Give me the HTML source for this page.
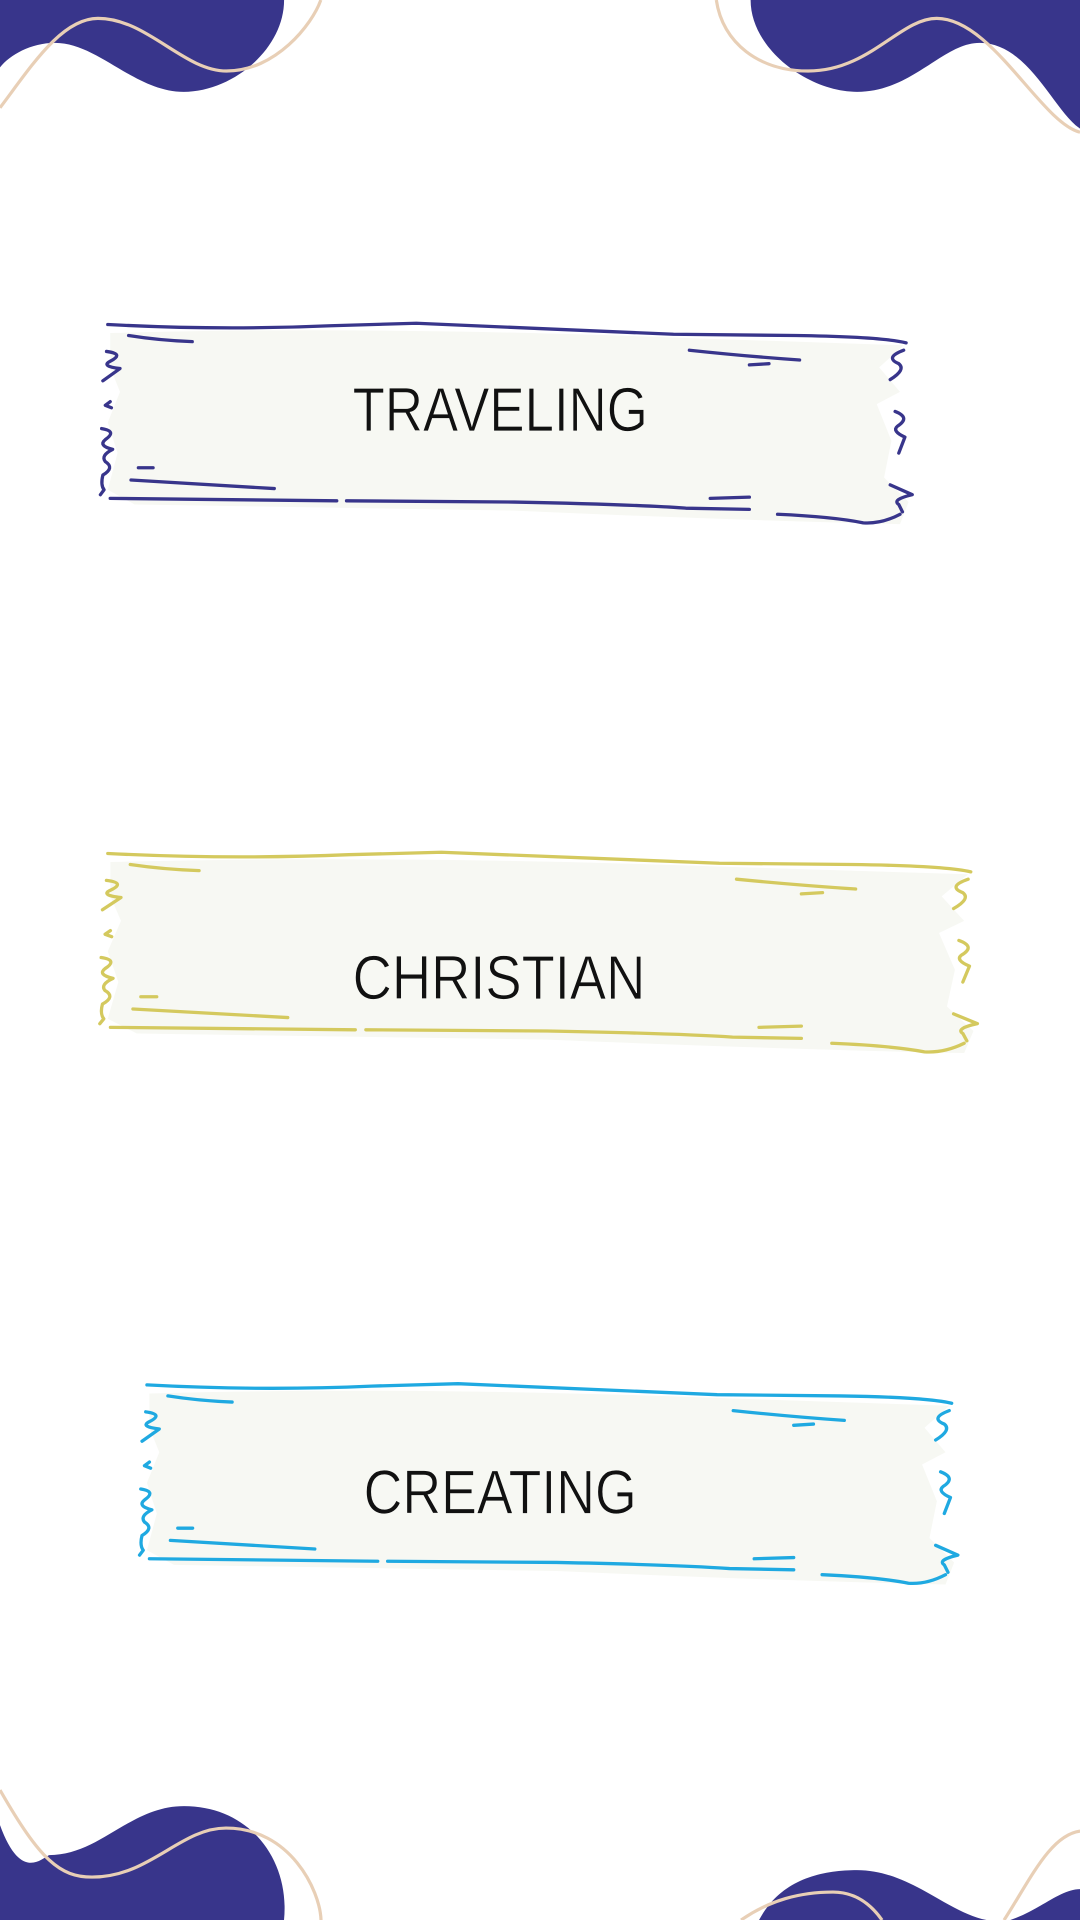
<!DOCTYPE html>
<html><head><meta charset="utf-8"><style>
html,body{margin:0;padding:0;background:#fff;}
svg{display:block;}
</style></head><body>
<svg width="1080" height="1920" viewBox="0 0 882 1568" xmlns="http://www.w3.org/2000/svg">
<defs>
<g id="tape">
<path d="M90,272 Q300,266 560,276 L738,282 L718,300 L735,320 L716,330 L728,360 L722,390 L742,410 L735,428 Q600,425 420,417 L110,412 L88,400 L96,370 L88,345 L98,320 L90,300 Z" fill="#f7f8f3" stroke="none"/>
<g fill="none" stroke-width="3.3" stroke-linecap="round" stroke-linejoin="round">
<path d="M88,265 Q180,270 270,266 L340,264 Q450,269 550,273 L650,274 Q720,275 740,280" vector-effect="non-scaling-stroke"/>
<path d="M105,274 Q130,278 157,279" vector-effect="non-scaling-stroke"/>
<path d="M87,287 Q102,289 90,295 Q82,299 98,301 L84,311" vector-effect="non-scaling-stroke"/>
<path d="M90,328 L86,331 L91,333" vector-effect="non-scaling-stroke"/>
<path d="M83,350 Q96,352 86,359 Q80,364 92,367 Q82,372 86,377 Q94,382 84,388 Q82,396 85,400 L82,404" vector-effect="non-scaling-stroke"/>
<path d="M113,382 L125,382" vector-effect="non-scaling-stroke"/>
<path d="M107,392 Q170,396 224,399" vector-effect="non-scaling-stroke"/>
<path d="M90,407 L275,409" vector-effect="non-scaling-stroke"/>
<path d="M283,409 L420,410 Q520,412 560,415 L612,416" vector-effect="non-scaling-stroke"/>
<path d="M580,407 L612,406" vector-effect="non-scaling-stroke"/>
<path d="M635,420 Q680,422 705,427 Q720,428 735,420" vector-effect="non-scaling-stroke"/>
<path d="M727,396 L745,404 Q728,408 734,412 L737,418" vector-effect="non-scaling-stroke"/>
<path d="M563,286 Q610,291 653,294" vector-effect="non-scaling-stroke"/>
<path d="M612,298 L628,297" vector-effect="non-scaling-stroke"/>
<path d="M738,286 Q722,292 734,297 Q740,302 727,310" vector-effect="non-scaling-stroke"/>
<path d="M731,336 Q744,341 733,348 Q728,352 739,357 L734,370" vector-effect="non-scaling-stroke"/>
</g>
</g>
</defs>

<!-- top corners -->
<path d="M0,0 L232,0 C232,40 190,75 150,75 C110,75 80,35 45,35 C25,35 8,45 0,55 Z" fill="#38358b"/>
<path d="M0,88 C25,55 50,15 80,15 C120,15 150,58 185,58 C225,58 255,20 262,0" fill="none" stroke="#e8cfb6" stroke-width="2.6"/>
<path d="M613,0 C613,40 660,75 700,75 C745,75 770,35 800,35 C840,35 860,90 882,105 L882,0 Z" fill="#38358b"/>
<path d="M585,0 C590,35 620,58 660,58 C710,58 735,15 765,15 C810,15 850,100 882,108" fill="none" stroke="#e8cfb6" stroke-width="2.6"/>

<!-- bottom corners -->
<g transform="scale(0.8167)">
<path d="M0,1825 C20,1880 40,1860 49,1855 C100,1855 130,1806 184,1806 C250,1806 290,1860 284,1920 L0,1920 Z" fill="#38358b"/>
<path d="M0,1790 C40,1860 60,1877 92,1877 C150,1877 180,1828 226,1828 C290,1828 320,1890 321,1920" fill="none" stroke="#e8cfb6" stroke-width="3.2"/>
<path d="M759,1920 C780,1880 820,1870 857,1870 C920,1870 960,1930 1010,1920 C1040,1910 1060,1889 1080,1889 L1080,1920 Z" fill="#38358b"/>
<path d="M741,1920 C770,1900 800,1892 833,1892 C860,1892 875,1910 882,1920" fill="none" stroke="#e8cfb6" stroke-width="3.2"/>
<path d="M1004,1920 C1030,1880 1050,1835 1080,1831" fill="none" stroke="#e8cfb6" stroke-width="3.2"/>
</g>

<!-- banners -->
<use href="#tape" stroke="#38358b"/>
<g transform="translate(88,432) scale(1.081,1) translate(-88,0)"><use href="#tape" stroke="#d4c95e"/></g>
<g transform="translate(120,866) scale(1.008,1) translate(-88,0)"><use href="#tape" stroke="#1fa9e1"/></g>

<g font-family="Liberation Sans, sans-serif" font-size="51" fill="#111" stroke="#f7f8f3" stroke-width="0.7">
<text x="288" y="352" textLength="241" lengthAdjust="spacingAndGlyphs">TRAVELING</text>
<text x="288" y="816" textLength="239" lengthAdjust="spacingAndGlyphs">CHRISTIAN</text>
<text x="297" y="1236" textLength="223" lengthAdjust="spacingAndGlyphs">CREATING</text>
</g>
</svg>
</body></html>
